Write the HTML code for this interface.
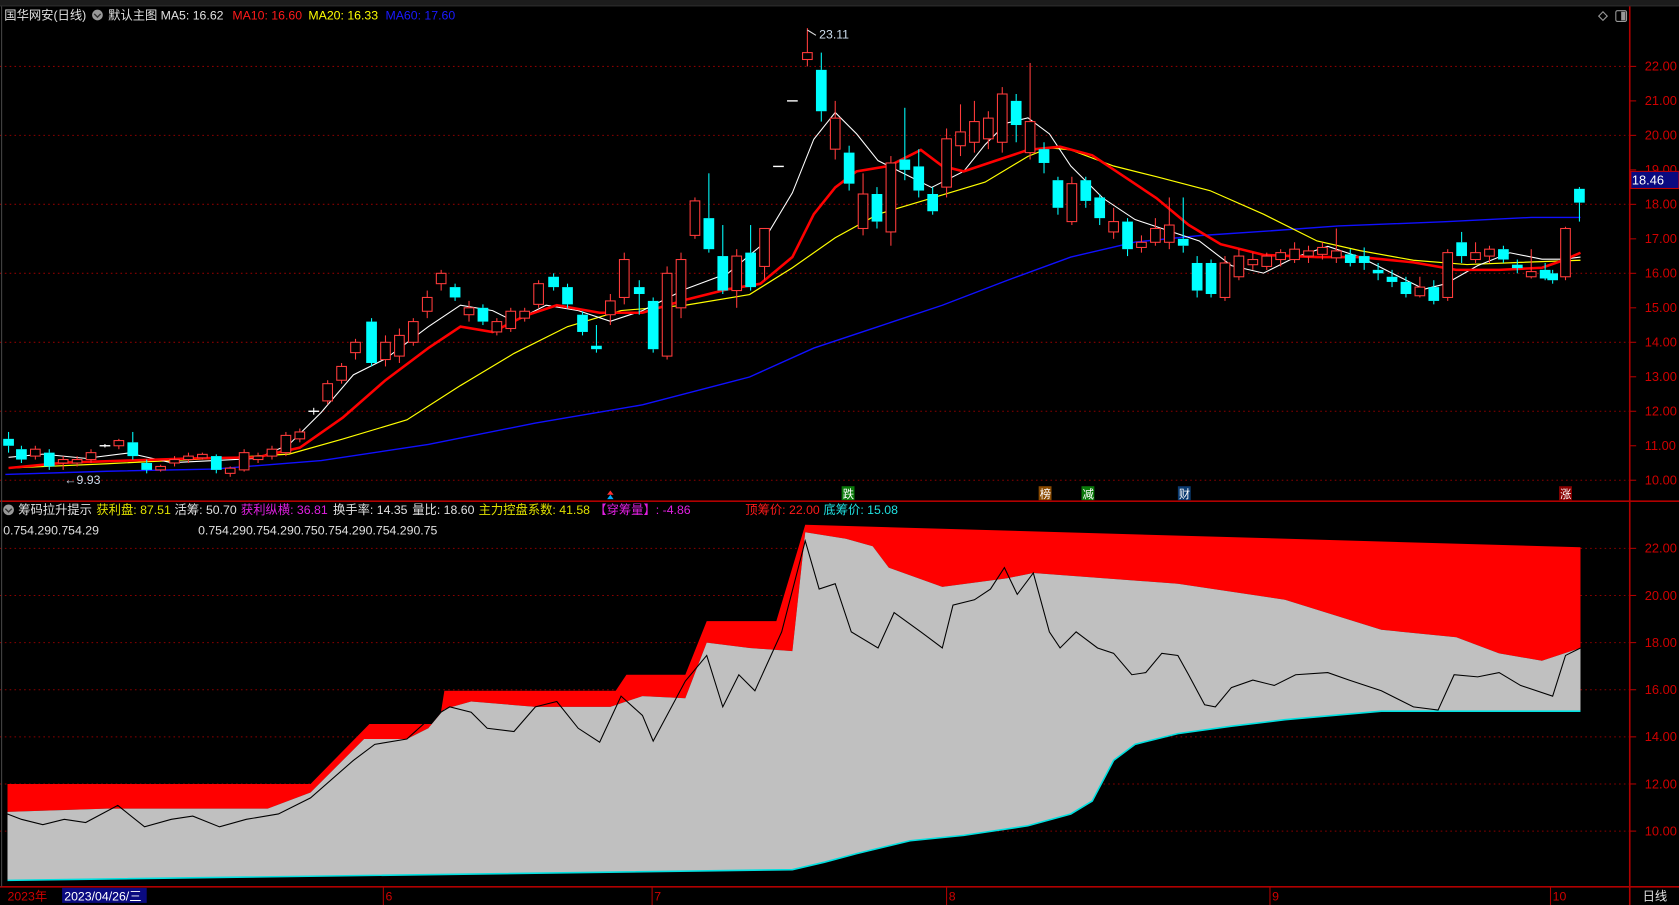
<!DOCTYPE html>
<html><head><meta charset="utf-8"><style>
html,body{margin:0;padding:0;background:#000;overflow:hidden}
svg{display:block}
text{font-family:"Liberation Sans","Noto Sans CJK SC",sans-serif;font-size:11.5px}
</style></head><body>
<svg id="s" width="1679" height="905" viewBox="0 0 1568 845" preserveAspectRatio="none" xmlns="http://www.w3.org/2000/svg">
<rect x="0" y="0" width="1568" height="845" fill="#000"/>
<rect x="0" y="0" width="1568" height="5" fill="#1c1c1c"/>
<line x1="0" y1="5.5" x2="1568" y2="5.5" stroke="#333" stroke-width="1"/>
<g id="grid" stroke="#8b0000" stroke-width="1" stroke-dasharray="1.5,3"></g>
<g id="lower"></g>
<g id="mas" fill="none"></g>
<g id="candles"></g>
<line x1="1522" y1="6" x2="1522" y2="845" stroke="#b00000" stroke-width="1.5"/>
<line x1="0" y1="468" x2="1568" y2="468" stroke="#b00000" stroke-width="1.5"/>
<line x1="0" y1="828" x2="1568" y2="828" stroke="#b00000" stroke-width="1.5"/>
<line x1="1.5" y1="6" x2="1.5" y2="828" stroke="#444" stroke-width="1"/>
<g id="axis" fill="#d00000"></g>
<rect x="1523" y="160" width="45" height="16" fill="#0a0a80" stroke="#c00000" stroke-width="1"/>
<text x="1524" y="172.5" fill="#fff" style="font-size:12px">18.46</text>
<text x="4" y="18" fill="#e0e0e0">国华网安(日线)</text>
<circle cx="91" cy="14" r="5" fill="#999"/>
<path d="M88 13 L91 16 L94 13" stroke="#333" stroke-width="1.3" fill="none"/>
<text x="101" y="18" fill="#e0e0e0">默认主图</text>
<text x="150" y="18" fill="#e0e0e0">MA5: 16.62</text>
<text x="217" y="18" fill="#ff1a1a">MA10: 16.60</text>
<text x="288" y="18" fill="#ffff00">MA20: 16.33</text>
<text x="360" y="18" fill="#1a1aff">MA60: 17.60</text>
<path d="M1497 11 L1501 15 L1497 19 L1493 15 Z" stroke="#999" fill="none"/>
<rect x="1509" y="10" width="10" height="10" rx="1.5" stroke="#999" fill="none"/>
<rect x="1514" y="11" width="4" height="8" fill="#999"/>
<text x="765" y="36" fill="#cde">23.11</text>
<path d="M754 28 L762 33" stroke="#ddd"/>
<text x="60" y="452" fill="#cde">←9.93</text>
<path d="M570 458 L573 462 L567 462Z" fill="#ff3030"/><path d="M570 462 L573 466 L567 466Z" fill="#00aaff"/>
<rect x="786" y="454" width="12" height="13" fill="#0a7a0a"/><text x="787" y="465" fill="#fff" style="font-size:10.5px">跌</text>
<rect x="970" y="454" width="12" height="13" fill="#8a4a00"/><text x="971" y="465" fill="#fff" style="font-size:10.5px">榜</text>
<rect x="1010" y="454" width="12" height="13" fill="#0a7a0a"/><text x="1011" y="465" fill="#fff" style="font-size:10.5px">减</text>
<rect x="1100" y="454" width="12" height="13" fill="#0a3a70"/><text x="1101" y="465" fill="#fff" style="font-size:10.5px">财</text>
<rect x="1456" y="454" width="12" height="13" fill="#8a0000"/><text x="1457" y="465" fill="#fff" style="font-size:10.5px">涨</text>
<circle cx="8" cy="476" r="5" fill="#999"/>
<path d="M5 475 L8 478 L11 475" stroke="#333" stroke-width="1.3" fill="none"/>
<text x="17" y="480" fill="#e0e0e0">筹码拉升提示</text>
<text x="90" y="480" fill="#e0e000">获利盘: 87.51</text>
<text x="163" y="480" fill="#e0e0e0">活筹: 50.70</text>
<text x="225" y="480" fill="#e020e0">获利纵横: 36.81</text>
<text x="311" y="480" fill="#e0e0e0">换手率: 14.35</text>
<text x="385" y="480" fill="#e0e0e0">量比: 18.60</text>
<text x="447" y="480" fill="#e0e000">主力控盘系数: 41.58</text>
<text x="555" y="480" fill="#e020e0">【穿筹量】: -4.86</text>
<text x="696" y="480" fill="#ff1a1a">顶筹价: 22.00</text>
<text x="769" y="480" fill="#20e0e0">底筹价: 15.08</text>
<text x="3" y="499" fill="#e0e0e0">0.754.290.754.29</text>
<text x="185" y="499" fill="#e0e0e0">0.754.290.754.290.750.754.290.754.290.75</text>
<text x="7" y="841" fill="#d00000">2023年</text>
<rect x="58" y="829" width="79" height="14" fill="#0a0a80"/>
<text x="60" y="841" fill="#fff">2023/04/26/三</text>
<g stroke="#b00000" stroke-width="1"><line x1="358" y1="828" x2="358" y2="845"/><line x1="609" y1="828" x2="609" y2="845"/><line x1="884" y1="828" x2="884" y2="845"/><line x1="1186" y1="828" x2="1186" y2="845"/><line x1="1448" y1="828" x2="1448" y2="845"/></g>
<text x="360" y="841" fill="#d00000">6</text>
<text x="611" y="841" fill="#d00000">7</text>
<text x="886" y="841" fill="#d00000">8</text>
<text x="1188" y="841" fill="#d00000">9</text>
<text x="1450" y="841" fill="#d00000">10</text>
<text x="1534" y="841" fill="#e0e0e0">日线</text>
</svg>
<script>
var NS="http://www.w3.org/2000/svg";
function el(p,t,a){var e=document.createElementNS(NS,t);for(var k in a)e.setAttribute(k,a[k]);p.appendChild(e);return e;}
var g=document.getElementById('grid'),ax=document.getElementById('axis');
function Y(p){return 62+(22-p)*32.2;}
function L(p){return 512+(22-p)*22;}
for(var p=10;p<=22;p++){var y=Y(p);if(p%2==0)el(g,'line',{x1:0,y1:y,x2:1522,y2:y});
 el(ax,'line',{x1:1522,y1:y,x2:1528,y2:y,stroke:'#b00000'});
 var t=el(ax,'text',{x:1536,y:y+4});t.textContent=p.toFixed(2);t.style.fontSize='12px';}
for(var p=10;p<=22;p+=2){var y=L(p);el(g,'line',{x1:0,y1:y,x2:1522,y2:y});
 el(ax,'line',{x1:1522,y1:y,x2:1528,y2:y,stroke:'#b00000'});
 var t=el(ax,'text',{x:1536,y:y+4});t.textContent=p.toFixed(2);t.style.fontSize='12px';}
function pts(a){return a.map(function(q){return q[0]+','+q[1]}).join(' ');}
var lo=document.getElementById('lower');
var redTop=[[7,732],[290,732],[345,676],[410,676],[415,645],[575,645],[585,630],[640,630],[660,580],[725,580],[752,490],[1476,511]];
var grayTop=[[7,758],[100,755],[250,755],[290,740],[340,690],[380,690],[400,680],[415,662],[440,655],[500,660],[570,660],[600,650],[640,652],[660,600],[700,605],[740,608],[752,497],[790,503],[815,510],[830,530],[880,548],[940,540],[965,535],[1100,545],[1200,560],[1290,588],[1360,595],[1400,610],[1440,617],[1476,605]];
var cyan=[[7,822],[740,812],[770,805],[800,797],[850,785],[900,780],[960,771],[1000,760],[1020,748],[1040,710],[1060,695],[1100,685],[1150,678],[1200,672],[1290,664],[1476,664]];
el(lo,'polygon',{points:pts(redTop.concat(grayTop.slice().reverse())),fill:'#ff0000'});
el(lo,'polygon',{points:pts(grayTop.concat(cyan.slice().reverse())),fill:'#c0c0c0'});
el(lo,'polyline',{points:pts(cyan),fill:'none',stroke:'#00e0e0','stroke-width':1.5});
var blk=[[7,760],[20,765],[40,770],[60,765],[80,768],[110,752],[135,772],[160,765],[180,762],[205,772],[230,765],[260,760],[290,745],[330,710],[350,695],[380,690],[400,672],[420,660],[440,665],[455,680],[480,683],[500,660],[520,655],[540,680],[560,693],[580,650],[600,668],[610,692],[640,636],[660,612],[675,660],[690,630],[705,645],[730,590],[752,505],[765,550],[780,545],[795,590],[820,605],[835,572],[860,590],[880,605],[890,565],[910,560],[925,550],[938,530],[950,555],[965,535],[980,590],[990,605],[1005,590],[1025,605],[1040,610],[1057,630],[1070,628],[1085,610],[1100,612],[1110,630],[1125,658],[1135,660],[1150,642],[1170,635],[1190,640],[1210,630],[1240,628],[1260,635],[1290,645],[1320,660],[1343,663],[1358,630],[1380,632],[1400,628],[1420,640],[1450,650],[1462,612],[1476,605]];
el(lo,'polyline',{points:pts(blk),fill:'none',stroke:'#000','stroke-width':1});
var m=document.getElementById('mas');
var ma60=[[5,443],[100,440],[200,438],[300,430],[400,415],[500,395],[600,378],[700,352],[760,325],[820,305],[880,285],[940,262],[1000,240],[1060,226],[1120,220],[1180,216],[1250,211],[1350,207],[1430,203],[1476,203]];
var ma20=[[8,437],[100,433],[200,428],[270,424],[320,410],[380,392],[430,360],[480,330],[530,305],[580,290],[640,285],[700,275],[740,250],[780,222],[820,200],[870,185],[920,170],[960,146],[980,138],[1000,140],[1040,155],[1080,165],[1130,178],[1180,200],[1230,225],[1270,234],[1320,243],[1370,247],[1420,245],[1476,243]];
var ma10=[[8,437],[60,432],[120,430],[180,428],[240,427],[280,418],[320,390],[360,355],[400,325],[430,305],[460,310],[490,295],[520,285],[560,292],[600,292],[640,280],[680,270],[710,265],[740,240],[760,200],[780,175],[800,160],[830,155],[860,140],[880,155],[900,160],[930,150],[960,140],[990,137],[1020,145],[1050,165],[1080,185],[1110,210],[1140,228],[1180,238],[1230,240],[1270,240],[1320,245],[1360,252],[1400,252],[1440,250],[1460,243],[1476,236]];
var ma5=[[8,427],[40,424],[80,428],[120,423],[160,432],[200,430],[240,428],[270,415],[300,385],[330,350],[360,335],[400,305],[430,285],[460,290],[480,300],[510,285],[540,290],[570,300],[600,290],[640,270],[680,255],[710,230],[740,180],[760,130],[780,105],[800,125],[820,150],[840,160],[870,175],[900,160],[920,135],[940,115],[960,110],[980,125],[1000,155],[1030,185],[1060,205],[1090,215],[1120,225],[1150,248],[1180,255],[1210,240],[1240,230],[1270,240],[1300,255],[1330,270],[1350,265],[1380,248],[1410,236],[1440,242],[1460,242],[1476,240]];
el(m,'polyline',{points:pts(ma60),stroke:'#1010ff','stroke-width':1.3});
el(m,'polyline',{points:pts(ma20),stroke:'#ffff00','stroke-width':1.1});
el(m,'polyline',{points:pts(ma5),stroke:'#ffffff','stroke-width':1});
el(m,'polyline',{points:pts(ma10),stroke:'#ff0000','stroke-width':2.4});
var C=[[8,11.2,11,11.4,10.8,0],[20,10.9,10.6,11,10.5,0],[33,10.7,10.9,11,10.6,1],[46,10.8,10.4,10.9,10.3,0],[59,10.5,10.6,10.7,10.3,1],[72,10.5,10.6,10.7,10.4,1],[85,10.6,10.8,10.9,10.5,1],[98,11,11,11.05,10.95,2],[111,11,11.15,11.2,10.9,1],[124,11.1,10.7,11.4,10.6,0],[137,10.5,10.3,10.6,10.2,0],[150,10.3,10.4,10.45,10.25,1],[163,10.5,10.6,10.7,10.4,1],[176,10.6,10.7,10.8,10.5,1],[189,10.65,10.75,10.8,10.6,1],[202,10.7,10.3,10.75,10.2,0],[215,10.2,10.35,10.4,10.1,1],[228,10.3,10.8,10.9,10.25,1],[241,10.6,10.7,10.8,10.5,1],[254,10.7,10.9,11,10.6,1],[267,10.8,11.3,11.4,10.7,1],[280,11.2,11.4,11.5,11.1,1],[293,12,12,12.1,11.9,2],[306,12.3,12.8,12.9,12.2,1],[319,12.9,13.3,13.4,12.8,1],[332,13.7,14,14.1,13.5,1],[347,14.6,13.4,14.7,13.3,0],[360,13.5,14,14.2,13.3,1],[373,13.6,14.2,14.4,13.4,1],[386,14,14.6,14.7,13.9,1],[399,14.9,15.3,15.5,14.7,1],[412,15.7,16,16.1,15.5,1],[425,15.6,15.3,15.7,15.2,0],[438,14.8,15,15.2,14.6,1],[451,15,14.6,15.1,14.5,0],[464,14.3,14.6,14.7,14.2,1],[477,14.4,14.9,15,14.3,1],[490,14.7,14.9,15,14.6,1],[503,15.1,15.7,15.8,15,1],[517,15.9,15.6,16,15.5,0],[530,15.6,15.1,15.7,15,0],[544,14.8,14.3,14.9,14.2,0],[557,13.9,13.8,14.5,13.7,0],[570,14.8,15.2,15.4,14.5,1],[583,15.3,16.4,16.6,15.1,1],[597,15.6,15.4,15.8,14.8,0],[610,15.2,13.8,15.3,13.7,0],[623,13.6,16,16.2,13.5,1],[636,15,16.4,16.6,14.7,1],[649,17.1,18.1,18.2,17,1],[662,17.6,16.7,18.9,16.6,0],[675,16.5,15.5,17.4,15.4,0],[688,15.5,16.5,16.7,15,1],[701,16.6,15.6,17.4,15.5,0],[714,16.2,17.3,17.3,15.8,1],[727,19.1,19.1,19.1,19.1,2],[740,21,21,21,21,2],[754,22.2,22.4,23.11,22,1],[767,20.7,21.9,22.4,20.4,0],[780,19.6,20.5,21,19.3,1],[793,18.6,19.5,19.7,18.4,0],[806,17.3,18.3,18.9,17.1,1],[819,17.5,18.3,18.5,17.3,0],[832,17.2,19.2,19.4,16.8,1],[845,19,19.3,20.8,18.7,0],[858,18.4,19.1,19.6,18.2,0],[871,17.8,18.3,18.5,17.7,0],[884,18.5,19.9,20.2,18.2,1],[897,19.7,20.1,20.9,19.4,1],[910,19.8,20.4,21,19.5,1],[923,19.9,20.5,20.7,19.6,1],[936,19.8,21.2,21.4,19.5,1],[949,21,20.3,21.2,19.8,0],[962,19.5,20.4,22.1,19.3,1],[975,19.2,19.6,19.8,18.9,0],[988,17.9,18.7,18.8,17.7,0],[1001,17.5,18.6,18.8,17.4,1],[1014,18.1,18.7,18.8,17.9,0],[1027,17.6,18.2,18.3,17.4,0],[1040,17.2,17.5,17.9,17,1],[1053,16.7,17.5,17.6,16.5,0],[1066,16.75,16.9,17.1,16.6,1],[1079,16.9,17.3,17.6,16.8,1],[1092,16.9,17.4,18.2,16.7,1],[1105,16.8,17,18.2,16.6,0],[1118,15.5,16.3,16.5,15.3,0],[1131,15.4,16.3,16.4,15.3,0],[1144,15.3,16.3,16.5,15.2,1],[1157,15.9,16.5,16.7,15.8,1],[1170,16.25,16.4,16.6,16.1,1],[1183,16.2,16.5,16.6,16.1,1],[1196,16.4,16.6,16.7,16.2,1],[1209,16.4,16.7,16.9,16.3,1],[1222,16.5,16.65,16.8,16.3,1],[1235,16.55,16.75,16.9,16.4,1],[1248,16.45,16.65,17.3,16.3,1],[1261,16.3,16.55,16.7,16.2,0],[1274,16.3,16.5,16.75,16.1,0],[1287,16.0,16.1,16.3,15.8,0],[1300,15.75,15.9,16.1,15.6,0],[1313,15.4,15.75,15.9,15.3,0],[1326,15.35,15.6,15.9,15.3,1],[1339,15.2,15.6,15.8,15.1,0],[1352,15.3,16.6,16.7,15.2,1],[1365,16.5,16.9,17.2,16.3,0],[1378,16.4,16.6,16.9,16.3,1],[1391,16.5,16.7,16.8,16.3,1],[1404,16.4,16.7,16.8,16.3,0],[1417,16.15,16.25,16.4,16.0,0],[1430,15.9,16.05,16.7,15.85,1],[1443,15.85,16.1,16.3,15.8,0],[1450,15.8,16.0,16.1,15.7,0],[1462,15.9,17.3,17.35,15.8,1],[1475,18.05,18.45,18.5,17.5,0]];
var cg=document.getElementById('candles');
C.forEach(function(c){var x=c[0],a=Math.max(c[1],c[2]),b=Math.min(c[1],c[2]);
 if(c[5]==2){el(cg,'line',{x1:x-5,y1:Y(a),x2:x+5,y2:Y(a),stroke:'#fff','stroke-width':1.3});
  el(cg,'line',{x1:x,y1:Y(c[3]),x2:x,y2:Y(c[4]),stroke:'#fff','stroke-width':1});return;}
 var col=c[5]?'#ff3b3b':'#00ffff';var yt=Y(a),yb=Y(b);if(yb-yt<1.2)yb=yt+1.2;
 el(cg,'line',{x1:x,y1:Y(c[3]),x2:x,y2:yt,stroke:col,'stroke-width':1});
 el(cg,'line',{x1:x,y1:yb,x2:x,y2:Y(c[4]),stroke:col,'stroke-width':1});
 if(c[5])el(cg,'rect',{x:x-4.5,y:yt,width:9,height:yb-yt,fill:'#000',stroke:col,'stroke-width':1});
 else el(cg,'rect',{x:x-5,y:yt,width:10,height:yb-yt,fill:col});
});
</script>
</body></html>
